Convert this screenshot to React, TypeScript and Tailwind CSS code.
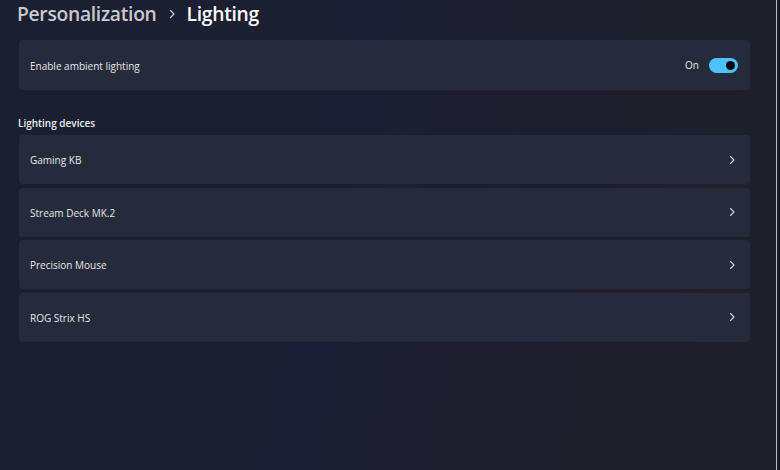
import React from "react";

const devices = ["Gaming KB", "Stream Deck MK.2", "Precision Mouse", "ROG Strix HS"];

function Chevron() {
  return (
    <svg width="8" height="10" viewBox="0 0 8 10" fill="none">
      <path d="M2.5 1.5 L6 5 L2.5 8.5" stroke="#d0d2d8" strokeWidth="1.1" strokeLinecap="round" strokeLinejoin="round" />
    </svg>
  );
}

export default function App() {
  return (
    <div
      className="flex h-[470px] w-[780px] overflow-hidden bg-[linear-gradient(100deg,#1b1f30_0%,#1c1f33_45%,#1e1f2b_75%,#1f2029_100%)]"
      style={{ fontFamily: '"Open Sans", "Noto Sans", sans-serif' }}
    >
      <div className="flex flex-1 flex-col pl-[19px] pr-[26px]">
        <div className="-ml-[2px] flex h-[28px] items-center gap-[9px]">
          <span className="text-[19.3px] font-semibold leading-none tracking-[-0.3px] text-[#c9cad0]">Personalization</span>
          <svg width="8" height="10" viewBox="0 0 8 10" fill="none" className="mx-[2px]">
            <path d="M2.5 1.5 L6 5 L2.5 8.5" stroke="#c9cad0" strokeWidth="1.2" strokeLinecap="round" strokeLinejoin="round" />
          </svg>
          <span className="text-[19.3px] font-semibold leading-none tracking-[-0.3px] text-white">Lighting</span>
        </div>
        <div className="mt-[12px] flex h-[50px] items-center justify-between rounded-[4px] bg-[#262b3c] pl-[11px] pr-[12px]">
          <span className="pt-[3px] text-[10px] text-[#e6e7ea]">Enable ambient lighting</span>
          <div className="flex items-center gap-[10px]">
            <span className="pt-[1px] text-[10px] text-[#e6e7ea]">On</span>
            <div className="flex h-[15px] w-[29px] items-center justify-end rounded-full bg-[#4cc2ff] pr-[3px]">
              <div className="h-[9px] w-[9px] rounded-full bg-black" />
            </div>
          </div>
        </div>
        <div className="-ml-[1px] mt-[26px] text-[10px] font-semibold text-[#eceef2]">Lighting devices</div>
        <div className="mt-[4px] flex flex-col gap-[3.6px]">
          {devices.map((d) => (
            <div key={d} className="flex h-[49px] items-center justify-between rounded-[4px] bg-[#262b3c] pl-[11px] pr-[14px]">
              <span className="pt-[2px] text-[10px] text-[#e6e7ea]">{d}</span>
              <Chevron />
            </div>
          ))}
        </div>
      </div>
      <div className="w-[1px] bg-[#b9b9bc]" />
      <div className="w-[3px] bg-[#1d1e25]" />
    </div>
  );
}
